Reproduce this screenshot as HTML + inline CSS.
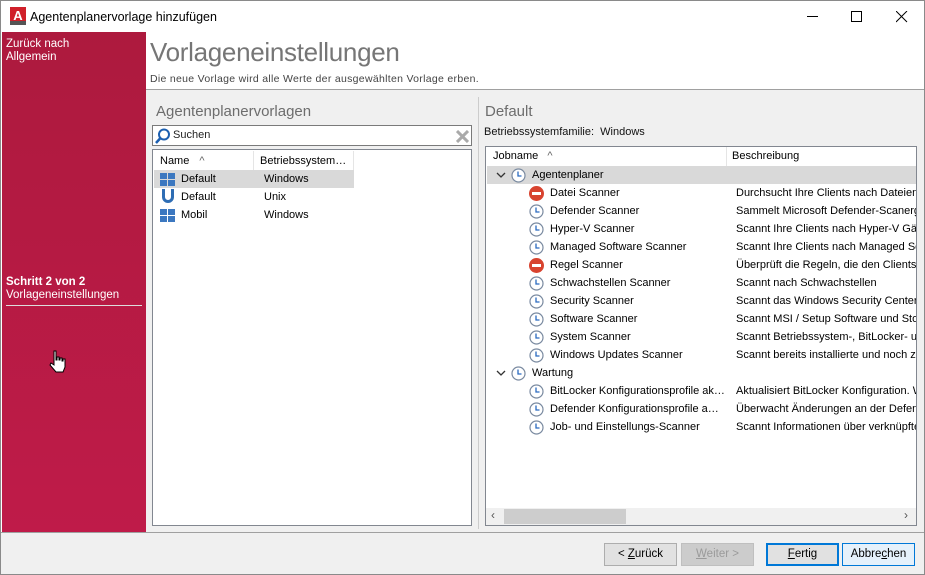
<!DOCTYPE html>
<html><head><meta charset="utf-8"><style>
*{box-sizing:border-box;margin:0;padding:0}
body{width:925px;height:575px;overflow:hidden;font-family:"Liberation Sans",sans-serif;font-size:11px;color:#000;background:#fff;position:relative}
.abs{position:absolute}
.win{left:0;top:0;width:925px;height:575px;border:1px solid #8a8a8a}
.title{left:1px;top:1px;width:923px;height:31px;background:#fff}
.side{left:2px;top:32px;width:144px;height:500px;background:linear-gradient(#ad1a3e,#bf1b49)}
.side .t{color:#fff;font-size:11.5px;line-height:13px}
.hdr{left:146px;top:32px;width:778px;height:58px;background:#fff;border-bottom:1px solid #a0a0a0}
.gray{left:146px;top:90px;width:778px;height:442px;background:#f0f0f0}
.bottom{left:1px;top:532px;width:923px;height:42px;background:#f0f0f0;border-top:1px solid #a0a0a0}
.box{background:#fff;border:1px solid #828790}
.row{position:absolute;height:18px;line-height:18px;white-space:nowrap}
.btn{position:absolute;top:543px;height:23px;border:1px solid #adadad;background:#e1e1e1;text-align:center;line-height:21px;font-size:11.5px}
.clk{position:absolute;width:15px;height:15px}
</style></head><body>
<div class="abs win"></div>
<div class="abs title">
 <svg class="abs" style="left:9px;top:6px" width="16" height="18"><rect x="0" y="0" width="16" height="18" fill="#d0202a"/><rect x="0" y="14" width="16" height="4" fill="#555"/><text x="8" y="13" font-size="13" font-weight="bold" fill="#fff" text-anchor="middle" font-family="Liberation Sans">A</text></svg>
 <div class="abs" style="left:29px;top:9px;font-size:12.5px">Agentenplanervorlage hinzufügen</div>
 <div class="abs" style="left:806px;top:15px;width:11px;height:1px;background:#000"></div>
 <div class="abs" style="left:850px;top:10px;width:11px;height:11px;border:1px solid #000"></div>
 <svg class="abs" style="left:895px;top:10px" width="12" height="12"><path d="M0 0L11 11M11 0L0 11" stroke="#000" stroke-width="1"/></svg>
</div>
<div class="abs side">
 <div class="abs t" style="left:4px;top:6px">Zurück nach<br>Allgemein</div>
 <div class="abs t" style="left:4px;top:244px;font-weight:bold">Schritt 2 von 2</div>
 <div class="abs t" style="left:4px;top:257px">Vorlageneinstellungen</div>
 <div class="abs" style="left:4px;top:273px;width:136px;height:1px;background:#ddd"></div>
 <svg class="abs" style="left:46px;top:318px" width="18" height="24"><path d="M6 1h2v9h1V7h2v3h1V8h2v3h1V9h2v8l-2 5H8L2 15l1-2 3 2z" fill="#fff" stroke="#000" stroke-width="1"/></svg>
</div>
<div class="abs hdr">
 <div class="abs" style="left:4px;top:5px;font-size:26px;color:#767676;letter-spacing:-0.3px">Vorlageneinstellungen</div>
 <div class="abs" style="left:4px;top:41px;font-size:10.5px;color:#444;letter-spacing:0.3px">Die neue Vorlage wird alle Werte der ausgewählten Vorlage erben.</div>
</div>
<div class="abs gray"></div>
<div class="abs" style="left:478px;top:97px;width:1px;height:432px;background:#ccc"></div>
<div class="abs" style="left:156px;top:103px;font-size:15px;color:#6d6d6d">Agentenplanervorlagen</div>
<div class="abs box" style="left:152px;top:125px;width:320px;height:21px;border-color:#7a7a7a">
 <svg class="abs" style="left:2px;top:2px" width="16" height="16"><circle cx="9" cy="6.5" r="5" fill="none" stroke="#1c5fb0" stroke-width="2"/><path d="M5.5 10L1 15" stroke="#1c5fb0" stroke-width="2.5"/></svg>
 <div class="abs" style="left:20px;top:3px;font-size:11px;color:#222">Suchen</div>
 <svg class="abs" style="left:303px;top:4px" width="13" height="13"><path d="M1 1L12 12M12 1L1 12" stroke="#aaa" stroke-width="3"/></svg>
</div>
<div class="abs box" style="left:152px;top:149px;width:320px;height:377px">
 <div class="row" style="left:0;top:1px;width:201px;height:20px;line-height:20px;border-right:1px solid #e5e5e5"><span style="margin-left:7px">Name</span><span style="margin-left:10px;color:#666">^</span></div>
 <div class="row" style="left:100px;top:1px;width:101px;height:20px;line-height:20px;border-left:1px solid #e5e5e5;padding-left:6px">Betriebssystem…</div>
 <div class="row" style="left:1px;top:20px;width:200px;background:#d9d9d9"></div>
 <svg class="abs" style="left:7px;top:23px" width="16" height="13"><rect x="0" y="0" width="7" height="6" fill="#3c78c0"/><rect x="8" y="0" width="7" height="6" fill="#3c78c0"/><rect x="0" y="7" width="7" height="6" fill="#3c78c0"/><rect x="8" y="7" width="7" height="6" fill="#3c78c0"/></svg>
 <div class="row" style="left:28px;top:20px">Default</div><div class="row" style="left:111px;top:20px">Windows</div>
 <svg class="abs" style="left:7px;top:39px" width="16" height="16"><path d="M2 0v8a6 6 0 0 0 12 0V0h-3v8a3 3 0 0 1-6 0V0z" fill="#2e6db4"/></svg>
 <div class="row" style="left:28px;top:38px">Default</div><div class="row" style="left:111px;top:38px">Unix</div>
 <svg class="abs" style="left:7px;top:59px" width="16" height="13"><rect x="0" y="0" width="7" height="6" fill="#3c78c0"/><rect x="8" y="0" width="7" height="6" fill="#3c78c0"/><rect x="0" y="7" width="7" height="6" fill="#3c78c0"/><rect x="8" y="7" width="7" height="6" fill="#3c78c0"/></svg>
 <div class="row" style="left:28px;top:56px">Mobil</div><div class="row" style="left:111px;top:56px">Windows</div>
</div>
<div class="abs" style="left:485px;top:103px;font-size:15px;color:#6d6d6d">Default</div>
<div class="abs" style="left:484px;top:126px;font-size:11px;color:#111">Betriebssystemfamilie:&nbsp; Windows</div>
<div class="abs box" style="left:485px;top:146px;width:432px;height:380px;overflow:hidden">
 <div class="row" style="left:0;top:0;width:241px;height:19px;line-height:19px;border-right:1px solid #e5e5e5;padding-left:7px">Jobname <span style="margin-left:6px;color:#666">^</span></div>
 <div class="row" style="left:241px;top:0;height:19px;line-height:19px;padding-left:5px">Beschreibung</div>
 <div class="row" style="left:1px;top:19px;width:430px;background:#d9d9d9"></div>
 <svg style="position:absolute;left:10px;top:25px" width="10" height="7"><path d="M1 1l4 4 4-4" fill="none" stroke="#333" stroke-width="1.3"/></svg>
 <svg style="position:absolute;left:10px;top:223px" width="10" height="7"><path d="M1 1l4 4 4-4" fill="none" stroke="#333" stroke-width="1.3"/></svg>
 <div id="rows"></div>
 <div class="abs" style="left:0;top:361px;width:430px;height:17px;background:#f0f0f0"></div>
 <div class="abs" style="left:18px;top:362px;width:122px;height:15px;background:#cdcdcd"></div>
 <div class="abs" style="left:5px;top:361px;font-size:12px;color:#555">‹</div>
 <div class="abs" style="left:418px;top:361px;font-size:12px;color:#555">›</div>
</div>
<div class="abs bottom"></div>
<div class="btn" style="left:604px;width:73px">&lt; <u>Z</u>urück</div>
<div class="btn" style="left:681px;width:73px;color:#9a9a9a;background:#cccccc;border-color:#bfbfbf"><u>W</u>eiter &gt;</div>
<div class="btn" style="left:766px;width:73px;border:2px solid #0078d7;line-height:19px"><u>F</u>ertig</div>
<div class="btn" style="left:842px;width:73px;border-color:#0078d7;background:#e5f1fb">Abbre<u>c</u>hen</div>
<script>
var clk='<svg class="clk" viewBox="0 0 15 15"><circle cx="7.5" cy="7.5" r="6.5" fill="#fff" stroke="#7a8aa0" stroke-width="1.2"/><path d="M7 3.5v4.5h3.5" fill="none" stroke="#2a6ac0" stroke-width="1.3"/></svg>';
var stop='<svg class="clk" viewBox="0 0 15 15"><circle cx="7.5" cy="7.5" r="7.5" fill="#d8432f"/><rect x="3" y="6" width="9" height="3" fill="#fff"/></svg>';
var R=[["Agentenplaner","",0,0],["Datei Scanner","Durchsucht Ihre Clients nach Dateien",1,1],["Defender Scanner","Sammelt Microsoft Defender-Scanergebnisse",1,0],["Hyper-V Scanner","Scannt Ihre Clients nach Hyper-V Gästen",1,0],["Managed Software Scanner","Scannt Ihre Clients nach Managed Software",1,0],["Regel Scanner","Überprüft die Regeln, die den Clients",1,1],["Schwachstellen Scanner","Scannt nach Schwachstellen",1,0],["Security Scanner","Scannt das Windows Security Center",1,0],["Software Scanner","Scannt MSI / Setup Software und Store",1,0],["System Scanner","Scannt Betriebssystem-, BitLocker- und",1,0],["Windows Updates Scanner","Scannt bereits installierte und noch zu",1,0],["Wartung","",0,0],["BitLocker Konfigurationsprofile ak…","Aktualisiert BitLocker Konfiguration. Wird",1,0],["Defender Konfigurationsprofile a…","Überwacht Änderungen an der Defender",1,0],["Job- und Einstellungs-Scanner","Scannt Informationen über verknüpfte",1,0]];
var h='';R.forEach(function(r,i){var y=19+i*18;var ix=r[2]?43:25;var tx=r[2]?64:46;
h+='<div style="position:absolute;left:'+ix+'px;top:'+(y+2)+'px">'+(r[3]?stop:clk)+'</div>';
h+='<div class="row" style="left:'+tx+'px;top:'+y+'px">'+r[0]+'</div>';
if(r[1])h+='<div class="row" style="left:250px;top:'+y+'px">'+r[1]+'</div>';});
document.getElementById('rows').innerHTML=h;
</script>
</body></html>
